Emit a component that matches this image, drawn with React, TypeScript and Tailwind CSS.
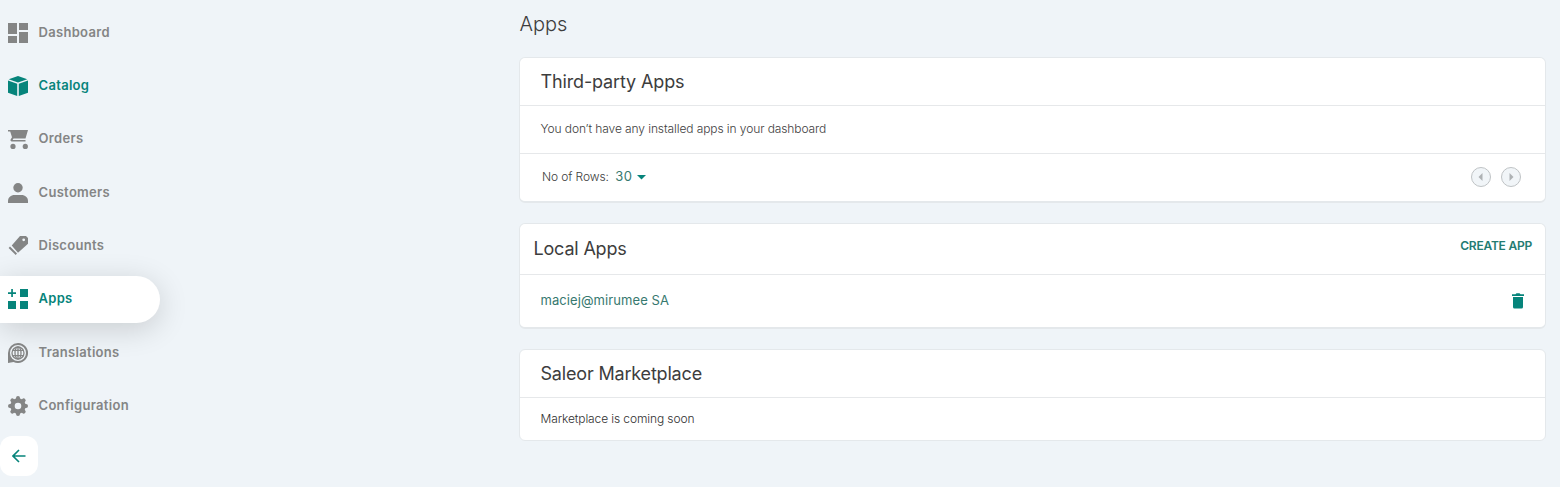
import React from "react";

type IconProps = { children: React.ReactNode };

function Icon({ children }: IconProps) {
  return (
    <svg className="-mt-[0.400px] h-5 w-5 shrink-0" viewBox="0 0 20 20" fill="currentColor">
      {children}
    </svg>
  );
}

const items = [
  {
    label: "Dashboard",
    tone: "text-[#848585]",
    icon: <path d="M0 0h9v11H0zM11 0h9v7h-9zM0 13h9v7H0zM11 9h9v11h-9z" />,
  },
  {
    label: "Catalog",
    tone: "text-[#06847B]",
    icon: <path d="M10 0l9.300 3.300L10 6.500.7 3.300zM0 4.500l9.200 3.200V20L0 16.800zM20 4.500v12.300L10.800 20V7.700z" />,
  },
  {
    label: "Orders",
    tone: "text-[#848585]",
    icon: (
      <>
        <path d="M0 1h20L17.500 9.500H5.500l-.9 1.500H17.500v1.500H3.600q-1.700-.3-1-1.900L4 8.200 2.200 2.500H0z" />
        <circle cx="5" cy="17.400" r="2.600" />
        <circle cx="17.300" cy="17.400" r="2.600" />
      </>
    ),
  },
  {
    label: "Customers",
    tone: "text-[#848585]",
    icon: (
      <>
        <circle cx="10" cy="4.700" r="4.700" />
        <path d="M0 20v-2c0-3.500 3-6 6.500-6h7c3.500 0 6.500 2.500 6.500 6v2z" />
      </>
    ),
  },
  {
    label: "Discounts",
    tone: "text-[#848585]",
    icon: (
      <>
        <path
          fillRule="evenodd"
          d="M12 0H18L20 2v5.700L10 16.700 3.700 9.400zM15.700 2.400a1.400 1.400 0 1 0 0 2.800 1.400 1.400 0 0 0 0-2.800z"
        />
        <path d="M2 10.600l7 7L7.700 19 .6 11.900z" />
      </>
    ),
  },
  {
    label: "Apps",
    tone: "text-[#06847B]",
    icon: <path d="M3.200 0h1.700v3.200H8v1.700H4.900V8H3.200V4.900H0V3.200h3.200zM12 0h8v8h-8zM0 12h8v8H0zM12 12h8v8h-8z" />,
  },
  {
    label: "Translations",
    tone: "text-[#848585]",
    icon: (
      <>
        <path
          fillRule="evenodd"
          d="M10 0a10 10 0 1 1-4.500 18.900L0 20V10A10 10 0 0 1 10 0zM10 2a8 8 0 1 0 0 16 8 8 0 0 0 0-16z"
        />
        <g fill="none" stroke="currentColor" strokeWidth="1.300">
          <circle cx="10" cy="10" r="6" />
          <ellipse cx="10" cy="10" rx="3" ry="6" />
          <path d="M10 4v12M4.500 7.300h11M4.500 12.700h11" />
        </g>
      </>
    ),
  },
  {
    label: "Configuration",
    tone: "text-[#848585]",
    icon: (
      <g fill="none" stroke="currentColor">
        <circle cx="10" cy="10" r="5.500" strokeWidth="4.400" />
        <path
          d="M10 2v1M10 17v1M2 10h1M17 10h1M4.340 4.340l.7.7M14.960 14.960l.7.7M4.340 15.660l.7-.7M14.960 5.040l.7-.7"
          strokeWidth="4"
          strokeLinecap="round"
        />
      </g>
    ),
  },
];

function Sidebar() {
  return (
    <aside className="flex w-[160px] shrink-0 flex-col pt-[9.400px]">
      <nav className="flex flex-col gap-[6.350px]">
        {items.map(({ label, tone, icon }) => (
          <a
            key={label}
            className={`flex h-[47px] items-center gap-[10.500px] rounded-r-full pl-2 text-[13px] font-semibold tracking-[0.310px] ${tone} ${
              label === "Apps" ? "bg-white shadow-[0_6px_30px_rgba(0,0,0,0.16)]" : ""
            }`}
          >
            <Icon>{icon}</Icon>
            <span className="-mt-[1px]">{label}</span>
          </a>
        ))}
      </nav>
      <button className="mt-[6.150px] flex h-10 w-[38px] items-center justify-center rounded-xl bg-white pr-[1px] text-[#06847B]">
        <svg width="14" height="14" viewBox="0 0 14 14" fill="none" stroke="currentColor" strokeWidth="1.600">
          <path d="M13.500 7H1.500M7 1L1 7l6 6" />
        </svg>
      </button>
    </aside>
  );
}

function Card({ children, className }: { children: React.ReactNode; className: string }) {
  return (
    <section
      className={`flex flex-col divide-y divide-[#e6e8ea] rounded-md border border-[#e4e8eb] bg-white ${className}`}
    >
      {children}
    </section>
  );
}

function PageButton({ d }: { d: string }) {
  return (
    <button className="flex h-5 w-5 items-center justify-center rounded-full border-[1.500px] border-[#bfc3c5] bg-[#f1f5f8] text-[#aeb2b4]">
      <svg width="8" height="8" viewBox="0 0 8 8" fill="currentColor" className="shrink-0">
        <path d={d} />
      </svg>
    </button>
  );
}

export default function App() {
  return (
    <div className="flex h-[487px] w-[1560px] overflow-hidden bg-[#eff4f8] font-['Inter',sans-serif] text-[#3d3d3d]">
      <Sidebar />
      <main className="ml-[359px] flex w-[1027px] flex-col">
        <h1 className="h-[57px] pt-[9px] pl-[0.500px] text-[20px] leading-[30px] font-light">Apps</h1>

        <Card className="h-[146px] border-b-2">
          <h2 className="flex h-[48px] items-center pl-[20.500px] text-[18px] tracking-[-0.140px]">Third-party Apps</h2>
          <p className="flex h-[48px] items-center pb-[2px] pl-[20.500px] text-[12px] font-light tracking-[-0.095px] text-[#3d3d3d]">
            You don’t have any installed apps in your dashboard
          </p>
          <div className="flex flex-1 items-center pr-6 pb-[1px] pl-[22px] text-[12px] font-light tracking-[-0.100px] text-[#3d3d3d]">
            <span>No of Rows:</span>
            <span className="ml-[6.500px] text-[13px] font-normal tracking-[0.300px] text-[#37796f]">30</span>
            <svg className="ml-[5px] text-[#06847B]" width="9" height="5" viewBox="0 0 9 5" fill="currentColor">
              <path d="M0 0h9L4.500 4.500z" />
            </svg>
            <div className="ml-auto flex gap-[10px]">
              <PageButton d="M5.500 0v8L1.500 4z" />
              <PageButton d="M2.500 0v8l4-4z" />
            </div>
          </div>
        </Card>

        <Card className="mt-5 h-[106px] border-b-2">
          <div className="flex h-[51px] items-center justify-between pr-[13px] pl-[13.500px]">
            <h2 className="-mt-[2px] text-[18px] tracking-[-0.180px]">Local Apps</h2>
            <button className="-mt-[6px] text-[12px] font-semibold tracking-[-0.220px] text-[#237b72]">CREATE APP</button>
          </div>
          <div className="flex flex-1 items-center justify-between pr-[21px] pl-[20.500px]">
            <a className="text-[13px] tracking-[0.080px] text-[#37796f]">maciej@mirumee SA</a>
            <svg width="12" height="16" viewBox="0 0 12 16" fill="#06847B">
              <path d="M0 1.200h3.500l1-1h3l1 1H12v1.800H0zM1 4h10v10q0 1.500-1.500 1.500h-7Q1 15.500 1 14z" />
            </svg>
          </div>
        </Card>

        <Card className="mt-5 h-[92px]">
          <h2 className="flex h-[48px] items-center pl-[20.500px] text-[18px] tracking-[-0.180px]">Saleor Marketplace</h2>
          <p className="flex flex-1 items-center pl-[20.500px] text-[12px] font-light tracking-[-0.110px] text-[#303030]">
            Marketplace is coming soon
          </p>
        </Card>
      </main>
    </div>
  );
}
